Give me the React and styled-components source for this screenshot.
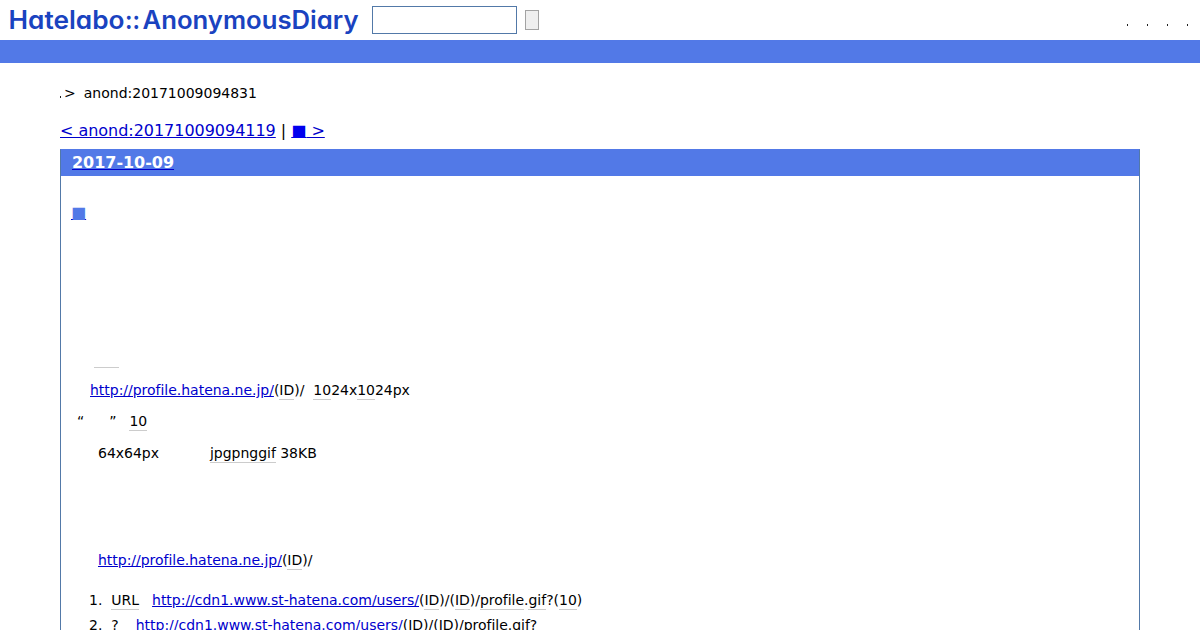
import styled, { createGlobalStyle } from 'styled-components'

const GlobalStyle = createGlobalStyle`
*{
box-sizing:border-box;
}
body{
margin:0;
height:630px;
overflow:hidden;
background-color:#fff;
color:#000;
font-family:"DejaVu Sans",sans-serif;
font-size:14px;
}
`
const Header = styled.header`
display:flex;
align-items:center;
height:40px;
`
const Logo = styled.svg`
display:block;
width:372px;
height:40px;
flex:none;
font-family:Inter,sans-serif;
font-weight:600;
font-size:25px;
font-feature-settings:"cv11" 1;
fill:#1a43c0;
`
const SearchInput = styled.input`
width:145px;
height:28px;
padding:0 4px;
border:1px solid #5279a8;
border-radius:0;
background-color:#fff;
outline:none;
`
const SearchButton = styled.button`
width:14px;
height:20px;
margin-left:8px;
padding:0;
border:1px solid #a3a3a3;
border-radius:0;
background-color:#efefef;
`
const Menu = styled.div`
display:flex;
gap:19px;
margin:9px 12px 0 auto;
`
const Dot = styled.span`
display:inline-block;
width:1px;
height:2px;
background-color:#222;
`
const Bar = styled.div`
height:23px;
background-color:#5279e7;
`
const Main = styled.main`
padding:0 60px;
`
const Breadcrumb = styled.div`
height:20px;
margin-top:20px;
line-height:20px;
white-space:pre;
`
const Pager = styled.div`
height:20px;
margin-top:18px;
font-size:16px;
letter-spacing:-.03px;
line-height:20px;
white-space:pre;
`
const Link = styled.a`
color:#0000cc;
text-decoration:underline;
`
const Day = styled.section`
height:481px;
margin-top:8px;
border:1px solid #5279a8;
border-top-color:#5279e7;
border-bottom:0;
overflow:hidden;
`
const DayTitle = styled.h2`
height:26px;
margin:0;
padding-left:11px;
background-color:#5279e7;
font-size:16px;
letter-spacing:-.03px;
line-height:25px;
`
const LinkText = styled.span`
color:${props => props.color};
`
const Anchor = styled.h3`
height:20px;
margin:27px 0 0 10px;
font-size:16px;
font-weight:normal;
line-height:20px;
`
const Line = styled.p`
height:20px;
margin:${props => props.top}px 0 0 ${props => props.left}px;
letter-spacing:-.02px;
line-height:20px;
white-space:pre;
`
const Keyword = styled.span`
padding-bottom:1px;
border-bottom:1px solid #ccc;
`
const Gap = styled.span`
display:inline-block;
width:${props => props.size}px;
`
const BlankKeyword = styled.div`
width:25px;
height:1px;
margin:144px 0 0 33px;
background-color:#ccc;
`
const List = styled.ol`
margin:20px 0 0;
padding:0 0 0 28px;
list-style:none;
`
const Item = styled.li`
height:25px;
letter-spacing:-.02px;
line-height:20px;
white-space:pre;
`

const App = () => {
    return (
        <>
            <GlobalStyle />
            <Header>
                <Logo viewBox="0 0 372 40">
                    <text x="8.5" y="29" textLength="116" lengthAdjust="spacingAndGlyphs">Hatelabo</text>
                    <text x="125" y="29" textLength="15" lengthAdjust="spacingAndGlyphs">::</text>
                    <text x="142.5" y="29" textLength="216" lengthAdjust="spacingAndGlyphs">AnonymousDiary</text>
                </Logo>
                <SearchInput type="text" />
                <SearchButton type="button" />
                <Menu>
                    {Array(4).fill().map((_, i) => <Dot key={i} />)}
                </Menu>
            </Header>
            <Bar />
            <Main>
                <Breadcrumb><Dot /><Gap size={3} />&gt;<Gap size={8} />anond:20171009094831</Breadcrumb>
                <Pager>
                    <Link>&lt; anond:20171009094119</Link> | <Link><LinkText color="#0000ee">■</LinkText> &gt;</Link>
                </Pager>
                <Day>
                    <DayTitle><Link><LinkText color="#fff">2017-10-09</LinkText></Link></DayTitle>
                    <Anchor><Link><LinkText color="#5279e7">■</LinkText></Link></Anchor>
                    <BlankKeyword />
                    <Line top={12} left={29}>
                        <Link>http://profile.hatena.ne.jp/</Link>(<Keyword>ID</Keyword>)/<Gap size={9} /><Keyword>10</Keyword>24x<Keyword>10</Keyword>24px
                    </Line>
                    <Line top={11} left={16}>
                        “<Gap size={25} />”<Gap size={13} /><Keyword>10</Keyword>
                    </Line>
                    <Line top={12} left={37}>
                        64x64px<Gap size={51} /><Keyword>jpgpnggif</Keyword> 38KB
                    </Line>
                    <Line top={87} left={37}>
                        <Link>http://profile.hatena.ne.jp/</Link>(<Keyword>ID</Keyword>)/
                    </Line>
                    <List>
                        <Item>
                            1.<Gap size={9} /><Keyword>URL</Keyword><Gap size={13} /><Link>http://cdn1.www.st-hatena.com/users/</Link>(<Keyword>ID</Keyword>)/(<Keyword>ID</Keyword>)/<Keyword>profile</Keyword>.<Keyword>gif</Keyword>?(<Keyword>10</Keyword>)
                        </Item>
                        <Item>
                            2.<Gap size={9} />?<Gap size={17} /><Link>http://cdn1.www.st-hatena.com/users/</Link>(<Keyword>ID</Keyword>)/(<Keyword>ID</Keyword>)/<Keyword>profile</Keyword>.<Keyword>gif</Keyword>?
                        </Item>
                    </List>
                </Day>
            </Main>
        </>
    )
}
export default App
